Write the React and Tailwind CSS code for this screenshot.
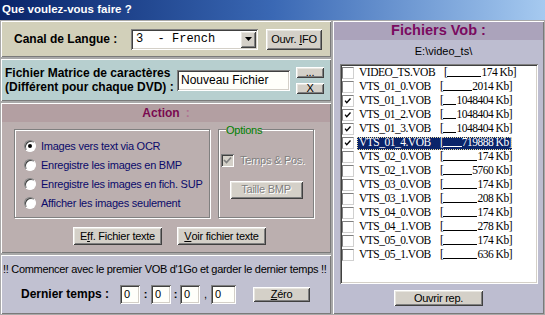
import React from 'react';

const raised = 'shadow-[inset_1px_1px_0_#ffffff,inset_-1px_-1px_0_#404040,inset_2px_2px_0_#e8e6e0,inset_-2px_-2px_0_#808080]';
const sunken = 'shadow-[inset_1px_1px_0_#808080,inset_-1px_-1px_0_#ffffff,inset_2px_2px_0_#404040,inset_-2px_-2px_0_#d4d0c8]';
const panel = 'shadow-[inset_1px_1px_0_#ffffff,inset_-1px_-1px_0_#7a7a7a]';
const etched = 'border border-[#808080] shadow-[1px_1px_0_#ffffff,inset_1px_1px_0_#ffffff]';
const ui = "font-['Liberation_Sans',Arial,sans-serif]";

const files = [
  ['VIDEO_TS.VOB', '174', false],
  ['VTS_01_0.VOB', '2014', false],
  ['VTS_01_1.VOB', '1048404', true],
  ['VTS_01_2.VOB', '1048404', true],
  ['VTS_01_3.VOB', '1048404', true],
  ['VTS_01_4.VOB', '719888', true, true],
  ['VTS_02_0.VOB', '174', false],
  ['VTS_02_1.VOB', '5760', false],
  ['VTS_03_0.VOB', '174', false],
  ['VTS_03_1.VOB', '208', false],
  ['VTS_04_0.VOB', '174', false],
  ['VTS_04_1.VOB', '278', false],
  ['VTS_05_0.VOB', '174', false],
  ['VTS_05_1.VOB', '636', false],
];

function Button({ className, children, disabled }) {
  return (
    <div
      className={`flex items-center justify-center bg-[#d4d0c8] text-[11px] tracking-[-0.25px] ${raised} ${disabled ? 'text-[#808080] [text-shadow:1px_1px_0_#fff]' : 'text-black'} ${className}`}
    >
      {children}
    </div>
  );
}

function Check() {
  return (
    <svg viewBox="0 0 12 12" className="absolute inset-0 w-full h-full">
      <path d="M2.5 5.5 L4.5 8 L9 3" fill="none" stroke="black" strokeWidth="1.6" />
    </svg>
  );
}

function Radio({ checked, label }) {
  return (
    <div className="flex items-center h-[12px]">
      <div className="relative w-[12px] h-[12px] rounded-full bg-white border border-t-[#808080] border-l-[#808080] border-b-[#ffffff] border-r-[#ffffff] shadow-[inset_1px_1px_0_#404040]">
        {checked && <div className="absolute left-[3px] top-[3px] w-[4px] h-[4px] rounded-full bg-black" />}
      </div>
      <span className="ml-[5px] leading-[12px] text-[11px] tracking-[-0.25px] text-[#0a0a6a]">{label}</span>
    </div>
  );
}

function Field({ className, children }) {
  return (
    <div className={`flex items-center bg-[#fffffa] pl-[4px] text-[11px] text-black ${sunken} ${className}`}>
      {children}
    </div>
  );
}

export default function App() {
  return (
    <div className={`w-[545px] h-[315px] overflow-hidden bg-[#a9a9a9] flex flex-col ${ui}`}>
      {/* Title */}
      <div className="h-[20px] flex items-center pl-[2px] bg-linear-to-r from-[#0a246a] via-[#3a68b4] to-[#a6caf0]">
        <span className="text-white font-bold text-[11.5px]">Que voulez-vous faire ?</span>
      </div>

      <div className="flex flex-1 pt-[1px]">
        {/* Left column */}
        <div className="w-[331px] flex flex-col gap-[2px] pl-[1px]">
          {/* Canal */}
          <div className={`h-[36px] bg-[#d2d0ba] flex items-center ${panel}`}>
            <span className="ml-[13px] w-[117px] font-bold text-[12px] text-black">Canal de Langue :</span>
            <div className={`relative w-[127px] h-[21px] bg-white flex items-center ${sunken}`}>
              <span className="ml-[5px] whitespace-pre font-['Liberation_Mono',monospace] text-[12px] text-black">3  - French</span>
              <div className={`absolute right-[2px] top-[2px] w-[16px] h-[17px] bg-[#d4d0c8] flex items-center justify-center ${raised}`}>
                <svg viewBox="0 0 7 4" className="w-[7px] h-[4px]"><path d="M0 0 H7 L3.5 4 Z" fill="black" /></svg>
              </div>
            </div>
            <Button className="ml-[8px] w-[56px] h-[21px]">Ouvr. <span className="underline ml-[3px]">I</span>FO</Button>
          </div>

          {/* Matrice */}
          <div className={`h-[42px] bg-[#b7cfcf] flex items-center ${panel}`}>
            <div className="ml-[4px] w-[172px] font-bold text-[12px] leading-[14px] text-black">
              <div>Fichier Matrice de caractères</div>
              <div>(Différent pour chaque DVD) :</div>
            </div>
            <Field className="w-[113px] h-[21px] text-[12px]">Nouveau Fichier</Field>
            <div className="ml-[6px] flex flex-col gap-[5px]">
              <Button className="w-[28px] h-[11px] leading-none">...</Button>
              <Button className="w-[28px] h-[11px] leading-none">X</Button>
            </div>
          </div>

          {/* Action */}
          <div className={`h-[150px] bg-[#bbafaf] flex flex-col ${panel}`}>
            <div className="h-[18px] mx-[1px] mt-[1px] bg-[#b39fa2] flex items-center justify-center">
              <span className="font-bold text-[12px] text-[#7a0a50]">Action</span>
              <span className="ml-[6px] font-bold text-[12px] text-[#b07090]">:</span>
            </div>
            <div className="flex mt-[7px] ml-[13px] gap-[8px]">
              <div className={`w-[196px] h-[89px] flex flex-col pt-[10px] pl-[9px] gap-[7px] ${etched}`}>
                <Radio checked label="Images vers text via OCR" />
                <Radio label="Enregistre les images en BMP" />
                <Radio label="Enregistre les images en fich. SUP" />
                <Radio label="Afficher les images seulement" />
              </div>
              <div className={`relative w-[96px] h-[89px] flex flex-col items-center ${etched}`}>
                <span className="absolute left-[7px] -top-[6px] bg-[#bbafaf] text-[11px] tracking-[-0.25px] leading-[12px] text-[#008000]">Options</span>
                <div className="flex items-center mt-[22px] -ml-[6px]">
                  <div className={`relative w-[13px] h-[13px] bg-[#d4d0c8] ${sunken}`}>
                    <svg viewBox="0 0 13 13" className="absolute inset-0 w-full h-full">
                      <path d="M3 6 L5.5 8.5 L10 3.5" fill="none" stroke="#808080" strokeWidth="1.7" />
                    </svg>
                  </div>
                  <span className="ml-[6px] text-[11px] tracking-[-0.25px] text-[#808080] [text-shadow:1px_1px_0_#fff]">Temps &amp; Pos.</span>
                </div>
                <Button disabled className="mt-[12px] w-[73px] h-[18px]">Taille BMP</Button>
              </div>
            </div>
            <div className="flex mt-[9px] ml-[72px] gap-[15px]">
              <Button className="w-[89px] h-[18px]">E<span className="underline">f</span>f. Fichier texte</Button>
              <Button className="w-[89px] h-[18px]"><span className="underline">V</span>oir fichier texte</Button>
            </div>
          </div>

          {/* Bottom */}
          <div className={`h-[59px] bg-[#c1c1d1] flex flex-col ${panel}`}>
            <div className="mt-[6px] ml-[2px] whitespace-nowrap text-[11px] tracking-[-0.3px] text-black">
              !! Commencer avec le premier VOB d'1Go et garder le dernier temps !!
            </div>
            <div className="flex items-center mt-[7px]">
              <span className="ml-[20px] w-[99px] font-bold text-[12px] text-black">Dernier temps :</span>
              <Field className="w-[20px] h-[19px]">0</Field>
              <span className="w-[11px] text-center text-[11px] font-bold">:</span>
              <Field className="w-[20px] h-[19px]">0</Field>
              <span className="w-[9px] text-center text-[11px] font-bold">:</span>
              <Field className="w-[20px] h-[19px]">0</Field>
              <span className="w-[11px] text-center text-[11px]">,</span>
              <Field className="w-[25px] h-[19px]">0</Field>
              <Button className="ml-[17px] w-[57px] h-[15px]"><span className="underline">Z</span>éro</Button>
            </div>
          </div>
        </div>

        {/* Right panel */}
        <div className={`ml-[2px] flex-1 mb-[1px] mr-[1px] bg-[#bdbdd0] flex flex-col ${panel}`}>
          <div className="h-[18px] mx-[1px] mt-[1px] bg-[#aba3bb] flex items-center justify-center">
            <span className="font-bold text-[14.5px] text-[#7a0a60]">Fichiers Vob :</span>
          </div>
          <div className="h-[22px] flex items-center justify-center text-[11px] text-black pl-[10px]">E:\video_ts\</div>
          <div className={`ml-[7px] w-[198px] h-[220px] mt-[2px] bg-white p-[2px] ${sunken}`}>
            {files.map(([name, size, checked, selected]) => (
              <div key={name} className="h-[14px] flex items-center">
                <div className="relative w-[12px] h-[12px] bg-white border border-t-[#808080] border-l-[#808080] border-b-[#d0d0d0] border-r-[#d0d0d0]">
                  {checked && <Check />}
                </div>
                <div
                  className={`ml-[3px] h-[13px] flex items-center whitespace-pre pl-[2px] font-['Liberation_Serif','Times_New_Roman',serif] text-[11.5px] tracking-[-0.5px] ${selected ? 'bg-[#0a246a] text-white outline outline-dotted outline-[#f0e0a0] -outline-offset-1' : 'text-black'}`}
                >
                  <span className={name === 'VIDEO_TS.VOB' ? 'w-[85px]' : 'w-[81px]'}>{name}</span>
                  <span className="w-[72px] flex items-baseline">
                    <span>[</span>
                    <span className={`flex-1 h-[1px] border-b ${selected ? 'border-white' : 'border-black'} relative top-[1px]`} />
                    <span>{size} Kb]</span>
                  </span>
                </div>
              </div>
            ))}
          </div>
          <div className="flex justify-center mt-[6px]">
            <Button className="w-[89px] h-[16px]">Ouvrir rep.</Button>
          </div>
        </div>
      </div>
    </div>
  );
}
